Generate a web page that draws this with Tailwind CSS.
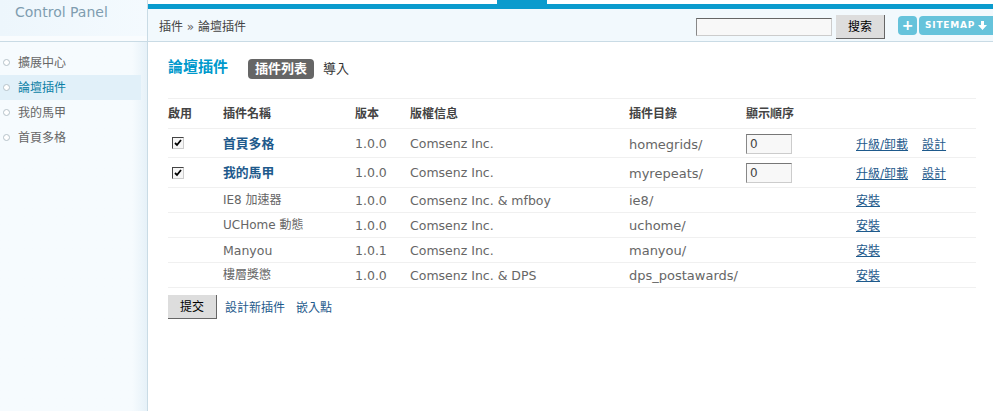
<!DOCTYPE html>
<html lang="zh-Hant">
  <head>
    <meta charset="UTF-8" />
    <title>Control Panel</title>
    <script src="https://cdn.jsdelivr.net/npm/@tailwindcss/browser@4"></script>
  </head>
  <body class="bg-white text-[#666] text-[12px] font-['DejaVu_Sans','Noto_Sans_CJK_TC',sans-serif] h-[411px] w-[993px] overflow-hidden flex">
    <!-- sidebar -->
    <aside class="w-[147px] shrink-0 h-full flex flex-col">
      <div class="h-[36px] pl-[15px] pt-[1px] bg-gradient-to-r from-[#edf6fc] to-[#f4fafe] text-[#7f9db0] text-[14px] leading-[22px]">Control Panel</div>
      <div class="h-[6px] bg-[#f9fcfe] border-b border-[#c9dbe5]"></div>
      <ul class="flex-1 pt-[8px] bg-gradient-to-r from-[#f6fbfe] from-90% to-[#e6f1f8]">
        <li class="h-[25px] flex items-center pl-[3px] gap-[8px]"><span class="size-[7px] rounded-full border border-[#b5c2c9] bg-white"></span>擴展中心</li>
        <li class="h-[25px] flex items-center pl-[3px] gap-[8px] bg-[#e1f0f9] text-[#0c7fa6] mr-[6px]"><span class="size-[7px] rounded-full border border-[#b5c2c9] bg-white"></span>論壇插件</li>
        <li class="h-[25px] flex items-center pl-[3px] gap-[8px]"><span class="size-[7px] rounded-full border border-[#b5c2c9] bg-white"></span>我的馬甲</li>
        <li class="h-[25px] flex items-center pl-[3px] gap-[8px]"><span class="size-[7px] rounded-full border border-[#b5c2c9] bg-white"></span>首頁多格</li>
      </ul>
    </aside>

    <main class="flex-1 border-l border-[#c9dbe5] h-full">
      <!-- top bar -->
      <div class="relative h-[42px] pt-[4px]">
        <div class="absolute top-0 left-[349px] w-[50px] h-[4px] bg-[#0a9bcd]"></div>
        <div class="h-[5px] bg-[#0a9bcd]"></div>
        <div class="h-[33px] bg-[#f2f9fd] border-b border-[#c9dbe5] flex items-center pt-[4px] pl-[11px] text-[#444]">
          <span>插件 <span class="text-[#666]">»</span> 論壇插件</span>
          <div class="ml-auto flex items-center">
            <input type="text" class="w-[136px] h-[18px] bg-[#f8f8f8] border border-t-[#666] border-l-[#888] border-r-[#ccc] border-b-[#ccc]" />
            <button class="ml-[4px] w-[49px] h-[24px] bg-[#ddd] border-b border-r border-[#666] text-[#000]">搜索</button>
            <span class="ml-[13px] -mt-[4px] w-[19px] h-[19px] rounded-[4px] bg-[#66c3db] text-white font-bold text-[14px] leading-[18px] text-center">+</span>
            <span class="ml-[2px] -mt-[4px] w-[74px] h-[19px] rounded-l-[4px] bg-[#66c3db] text-white font-bold text-[9px] leading-[19px] pl-[6px] tracking-[0.8px] whitespace-nowrap flex items-center">
              SITEMAP
              <svg class="ml-[3px] size-[9px]" viewBox="0 0 9 9"><path d="M3 0h3v4h3L4.500 9 0 4h3z" fill="#fff"/></svg>
            </span>
          </div>
        </div>
      </div>

      <div class="pl-[20px] pr-[17px]">
        <!-- title and tabs -->
        <div class="h-[56px] flex items-start pt-[16px]">
          <h1 class="text-[15px] font-bold text-[#09c] leading-[18px] w-[80px]">論壇插件</h1>
          <span class="mt-[1px] bg-[#666] text-white text-[13px] font-bold rounded-[4px] h-[20px] leading-[20px] px-[7px]">插件列表</span>
          <span class="mt-[1px] ml-[9px] text-[13px] text-[#333] leading-[20px]">導入</span>
        </div>

        <form>
          <table class="w-[808px] table-fixed border-collapse border-t border-[#f0f0f0]">
            <colgroup>
              <col class="w-[55px]" /><col class="w-[132px]" /><col class="w-[55px]" /><col class="w-[219px]" /><col class="w-[117px]" /><col class="w-[110px]" /><col class="w-[120px]" />
            </colgroup>
            <thead>
              <tr class="h-[30px] border-b border-[#f0f0f0] text-left text-[#444]">
                <th class="font-bold">啟用</th><th class="font-bold">插件名稱</th><th class="font-bold">版本</th><th class="font-bold">版權信息</th><th class="font-bold">插件目錄</th><th class="font-bold">顯示順序</th><th></th>
              </tr>
            </thead>
            <tbody>
              <tr class="h-[29px] border-b border-[#f0f0f0]">
                <td>
                  <span class="ml-[4px] size-[12px] flex items-center justify-center bg-[#f6f6f6] border border-t-[#444] border-l-[#444] border-r-[#ccc] border-b-[#ccc]">
                    <svg class="size-[8px]" viewBox="0 0 8 8"><path d="M1 4l2 2 4-5" fill="none" stroke="#000" stroke-width="1.800"/></svg>
                  </span>
                </td>
                <td class="font-bold text-[12.800px] text-[#1e5a8c] pt-[1px]">首頁多格</td><td class="pt-[3px] text-[12.500px]">1.0.0</td><td class="pt-[3px] text-[12.500px]">Comsenz Inc.</td><td class="pt-[3px] text-[13px]">homegrids/</td>
                <td class="pt-[2px]"><input type="text" value="0" class="w-[46px] h-[20px] pl-[3px] bg-[#f8f8f8] text-[#444] border border-t-[#777] border-l-[#888] border-r-[#ccc] border-b-[#ccc]" /></td>
                <td class="pt-[3px] text-[#1e5a8c]"><a href="#" class="underline">升級/卸載</a><a href="#" class="underline ml-[14px]">設計</a></td>
              </tr>
              <tr class="h-[30px] border-b border-[#f0f0f0]">
                <td>
                  <span class="ml-[4px] size-[12px] flex items-center justify-center bg-[#f6f6f6] border border-t-[#444] border-l-[#444] border-r-[#ccc] border-b-[#ccc]">
                    <svg class="size-[8px]" viewBox="0 0 8 8"><path d="M1 4l2 2 4-5" fill="none" stroke="#000" stroke-width="1.800"/></svg>
                  </span>
                </td>
                <td class="font-bold text-[12.800px] text-[#1e5a8c]">我的馬甲</td><td class="pt-[2px] text-[12.500px]">1.0.0</td><td class="pt-[2px] text-[12.500px]">Comsenz Inc.</td><td class="pt-[2px] text-[13px]">myrepeats/</td>
                <td class="pt-[1px]"><input type="text" value="0" class="w-[46px] h-[20px] pl-[3px] bg-[#f8f8f8] text-[#444] border border-t-[#777] border-l-[#888] border-r-[#ccc] border-b-[#ccc]" /></td>
                <td class="pt-[2px] text-[#1e5a8c]"><a href="#" class="underline">升級/卸載</a><a href="#" class="underline ml-[14px]">設計</a></td>
              </tr>
              <tr class="h-[25px] border-b border-[#f0f0f0]">
                <td></td><td>IE8 加速器</td><td class="pt-[2px] text-[12.500px]">1.0.0</td><td class="pt-[2px] text-[12.500px]">Comsenz Inc. &amp; mfboy</td><td class="pt-[2px] text-[13px]">ie8/</td><td></td>
                <td class="pt-[2px] text-[#1e5a8c]"><a href="#" class="underline">安裝</a></td>
              </tr>
              <tr class="h-[25px] border-b border-[#f0f0f0]">
                <td></td><td>UCHome 動態</td><td class="pt-[2px] text-[12.500px]">1.0.0</td><td class="pt-[2px] text-[12.500px]">Comsenz Inc.</td><td class="pt-[2px] text-[13px]">uchome/</td><td></td>
                <td class="pt-[2px] text-[#1e5a8c]"><a href="#" class="underline">安裝</a></td>
              </tr>
              <tr class="h-[25px] border-b border-[#f0f0f0]">
                <td></td><td class="pt-[2px] text-[12.500px]">Manyou</td><td class="pt-[2px] text-[12.500px]">1.0.1</td><td class="pt-[2px] text-[12.500px]">Comsenz Inc.</td><td class="pt-[2px] text-[13px]">manyou/</td><td></td>
                <td class="pt-[2px] text-[#1e5a8c]"><a href="#" class="underline">安裝</a></td>
              </tr>
              <tr class="h-[25px] border-b border-[#f0f0f0]">
                <td></td><td>樓層獎懲</td><td class="pt-[2px] text-[12.500px]">1.0.0</td><td class="pt-[2px] text-[12.500px]">Comsenz Inc. &amp; DPS</td><td class="pt-[2px] text-[13px]">dps_postawards/</td><td></td>
                <td class="pt-[2px] text-[#1e5a8c]"><a href="#" class="underline">安裝</a></td>
              </tr>
            </tbody>
          </table>
          <div class="flex items-center mt-[7px] text-[#1e5a8c]">
            <button type="button" class="w-[49px] h-[24px] bg-[#ddd] border-b border-r border-[#666] text-[#000]">提交</button>
            <a href="#" class="ml-[8px] pt-[2px]">設計新插件</a>
            <a href="#" class="ml-[11px] pt-[2px]">嵌入點</a>
          </div>
        </form>
      </div>
    </main>
  </body>
</html>
